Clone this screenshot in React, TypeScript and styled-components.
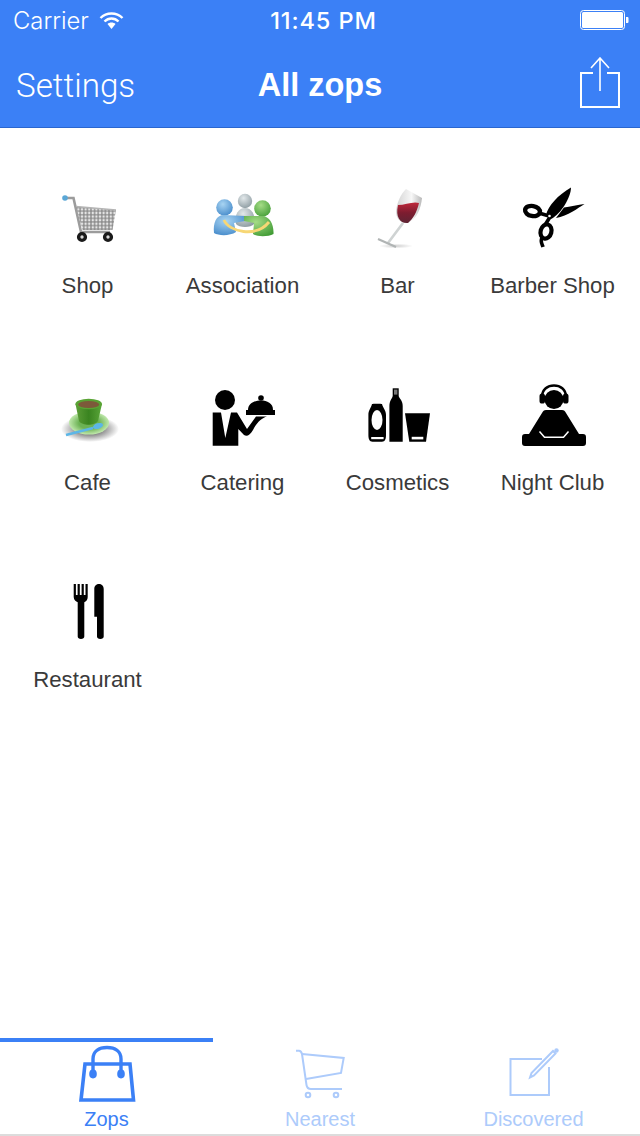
import React from 'react';
import styled, { createGlobalStyle } from 'styled-components';

const BLUE = '#3b80f6';

const GlobalStyles = createGlobalStyle`
  html, body {
    margin: 0;
    padding: 0;
    background: #fff;
    font-family: "Liberation Sans", Arial, sans-serif;
  }
`;

const Page = styled.div`
  width: 640px;
  height: 1136px;
  display: flex;
  flex-direction: column;
  background: #fff;
  overflow: hidden;
`;

const Header = styled.header`
  height: 127px;
  flex: none;
  background: ${BLUE};
  border-bottom: 1px solid #2a66cf;
  color: #fff;
  display: flex;
  flex-direction: column;
`;

const StatusBar = styled.div`
  height: 40px;
  padding: 0 11px 0 13px;
  display: grid;
  grid-template-columns: 1fr auto 1fr;
  align-items: center;
`;

const StatusLeft = styled.div`
  display: flex;
  align-items: center;
  gap: 10px;
  font-size: 23.8px;
  font-family: Inter, sans-serif;
  font-weight: 300;
`;

const Clock = styled.div`
  font-size: 23.5px;
  font-weight: 500;
  font-family: Inter, sans-serif;
  letter-spacing: 0.9px;
  margin-left: 5px;
`;

const StatusRight = styled.div`
  display: flex;
  justify-content: flex-end;
`;

const NavBar = styled.div`
  flex: 1;
  display: grid;
  grid-template-columns: 1fr auto 1fr;
  align-items: center;
  padding: 3px 16px 0;
`;

const NavLink = styled.div`
  font-family: Roboto, sans-serif;
  font-size: 33.2px;
  font-weight: 300;
`;

const NavTitle = styled.h1`
  margin: 0;
  font-size: 32.5px;
  font-weight: 700;
  font-family: "Liberation Sans", sans-serif;
`;

const NavAction = styled.div`
  display: flex;
  justify-content: flex-end;
  padding-right: 4px;
  margin-bottom: 6px;
`;

const Grid = styled.main`
  flex: 1;
  display: grid;
  grid-template-columns: repeat(4, 155px);
  grid-auto-rows: 197px;
  padding: 58px 10px 0;
`;

const Tile = styled.div`
  display: flex;
  flex-direction: column;
  align-items: center;
`;

const IconBox = styled.svg`
  width: 66px;
  height: 66px;
  display: block;
`;

const Label = styled.span`
  margin-top: 21px;
  font-size: 22.2px;
  line-height: 26px;
  color: #3a3a3a;
`;

const TabBar = styled.nav`
  height: 96px;
  flex: none;
  display: grid;
  grid-template-columns: 213px 214px 213px;
  border-bottom: 2px solid #dcdcdc;
`;

const Tab = styled.div<{ $active?: boolean }>`
  display: flex;
  flex-direction: column;
  align-items: center;
  border-top: 4px solid ${(p) => (p.$active ? BLUE : 'transparent')};
  color: ${(p) => (p.$active ? BLUE : '#adcbfb')};
`;

const TabIcon = styled.svg`
  width: 64px;
  height: 60px;
  display: block;
  margin-top: 2px;
`;

const TabLabel = styled.span`
  font-size: 20px;
  line-height: 24px;
  margin-top: 3px;
`;

const CartIcon = () => (
  <IconBox viewBox="0 0 66 66">
    <defs>
      <pattern id="mesh" width="3.6" height="3.6" patternUnits="userSpaceOnUse">
        <rect width="3.6" height="3.6" fill="#8e8e8e" />
        <circle cx="1.8" cy="1.8" r="1.25" fill="#e6e6e6" />
      </pattern>
    </defs>
    <path d="M10 12H18.5L26 46H55" fill="none" stroke="#9c9c9c" strokeWidth="2.6" />
    <circle cx="10" cy="12" r="2.8" fill="#5aa7d6" />
    <path d="M21 20.5L61 24L57.5 44L27.5 44Z" fill="url(#mesh)" />
    <path d="M21 20.5L61 24" stroke="#b5b5b5" strokeWidth="1.4" />
    <circle cx="27" cy="51" r="3.4" fill="#d8d8d8" stroke="#1a1a1a" strokeWidth="3.4" />
    <circle cx="53" cy="51" r="3.4" fill="#d8d8d8" stroke="#1a1a1a" strokeWidth="3.4" />
  </IconBox>
);

const PeopleIcon = () => (
  <IconBox viewBox="0 0 66 66">
    <defs>
      <radialGradient id="pBlue" cx="0.4" cy="0.3" r="0.8">
        <stop offset="0" stopColor="#a8d4f2" />
        <stop offset="1" stopColor="#3f86c8" />
      </radialGradient>
      <radialGradient id="pGreen" cx="0.4" cy="0.3" r="0.8">
        <stop offset="0" stopColor="#a5dc86" />
        <stop offset="1" stopColor="#3f9a33" />
      </radialGradient>
      <radialGradient id="pGrey" cx="0.4" cy="0.3" r="0.8">
        <stop offset="0" stopColor="#e2e8ea" />
        <stop offset="1" stopColor="#87969c" />
      </radialGradient>
    </defs>
    <circle cx="35" cy="15" r="7.2" fill="url(#pGrey)" />
    <path d="M26 38C24 28 29 22 35 22C41 22 46 28 44 38C41 42 29 42 26 38Z" fill="url(#pGrey)" />
    <circle cx="14.5" cy="21.5" r="8.3" fill="url(#pBlue)" />
    <path d="M4 47C3 37 6 29 14 29C20 29 28 30 35 30V35L24 37L26 46C20 50 9 50 4 47Z" fill="url(#pBlue)" />
    <circle cx="52.5" cy="22.5" r="8.3" fill="url(#pGreen)" />
    <path d="M34 30L52 30C60 30 64 39 63.5 48C58 51 47 51 43 48L44 37L34 35Z" fill="url(#pGreen)" />
    <path d="M14 34C19 46 46 52 59 36" fill="none" stroke="#f7d775" strokeWidth="2.8" />
  </IconBox>
);

const WineIcon = () => (
  <IconBox viewBox="0 0 66 66">
    <defs>
      <linearGradient id="wine" x1="0" y1="0" x2="0" y2="1">
        <stop offset="0" stopColor="#c0283a" />
        <stop offset="0.5" stopColor="#7d1c30" />
        <stop offset="1" stopColor="#5e2434" />
      </linearGradient>
      <linearGradient id="glass" x1="0" y1="0" x2="1" y2="0">
        <stop offset="0" stopColor="#d4d4d4" />
        <stop offset="0.6" stopColor="#f7f7f7" />
        <stop offset="1" stopColor="#b8b8b8" />
      </linearGradient>
      <radialGradient id="floor">
        <stop offset="0" stopColor="#cfcfcf" />
        <stop offset="1" stopColor="#fff" />
      </radialGradient>
    </defs>
    <ellipse cx="31" cy="60" rx="17" ry="2.4" fill="url(#floor)" />
    <path d="M41 3L57 12C56 22 52 33 43 37C36 38 31 33 31 25C32 16 36 8 41 3Z" fill="url(#glass)" />
    <path d="M33 19C40 19 48 15 54 17C52 26 48 33 43 37C36 38 30 32 33 19Z" fill="url(#wine)" />
    <path d="M38 37L23 57" stroke="#cfd3d3" strokeWidth="2.6" />
    <path d="M13 53L31 61" stroke="#b0b4b4" strokeWidth="2.2" />
  </IconBox>
);

const ScissorsIcon = () => (
  <IconBox viewBox="0 0 66 66">
    <path d="M51 1.5C51 11 41 28 31 33L26 29C28 20 38 9 51 1.5Z" fill="#000" />
    <path d="M64.5 18C58 22 48 30 36 32L44 21.5C50 20.5 58 19 64.5 18Z" fill="#000" />
    <ellipse cx="12.5" cy="25" rx="7.5" ry="5" fill="none" stroke="#000" strokeWidth="4.4" transform="rotate(10 12.5 25)" />
    <path d="M19 27L29 30" stroke="#000" strokeWidth="3.6" />
    <ellipse cx="26" cy="45.5" rx="5.4" ry="7.2" fill="none" stroke="#000" strokeWidth="4.2" transform="rotate(15 26 45.5)" />
    <path d="M30 31L25 39M22 52C20 55 22 58 23 61" fill="none" stroke="#000" strokeWidth="3.6" />
    <circle cx="29.5" cy="30" r="1.3" fill="#fff" />
  </IconBox>
);

const CupIcon = () => (
  <IconBox viewBox="0 0 66 66">
    <defs>
      <radialGradient id="cupShadow">
        <stop offset="0.35" stopColor="#777" />
        <stop offset="1" stopColor="#fff" />
      </radialGradient>
      <linearGradient id="cupBody" x1="0" y1="0" x2="1" y2="0">
        <stop offset="0" stopColor="#5d9e38" />
        <stop offset="0.5" stopColor="#3a8420" />
        <stop offset="1" stopColor="#5aa63a" />
      </linearGradient>
      <radialGradient id="saucer">
        <stop offset="0.5" stopColor="#6cb254" />
        <stop offset="1" stopColor="#c0e8ac" />
      </radialGradient>
    </defs>
    <ellipse cx="35" cy="46" rx="29" ry="13" fill="url(#cupShadow)" />
    <ellipse cx="34" cy="40" rx="20" ry="11.5" fill="url(#saucer)" />
    <path d="M20.5 21H47L43 38C40 43 27 43 24 38Z" fill="url(#cupBody)" />
    <ellipse cx="33.7" cy="21" rx="13.3" ry="5.2" fill="#59a334" />
    <ellipse cx="33.7" cy="21.5" rx="10.5" ry="3.6" fill="#7c5a3a" />
    <path d="M11 52L38 45" stroke="#5cb6e6" strokeWidth="2.4" />
    <ellipse cx="43" cy="43" rx="5.2" ry="2.8" fill="#5cb6e6" transform="rotate(-18 43 43)" />
  </IconBox>
);

const WaiterIcon = () => (
  <IconBox viewBox="0 0 66 66">
    <circle cx="15" cy="17" r="10" fill="#000" />
    <path d="M2.7 29.5H11L15.3 55L21 29.5H27L37 46L46 33.5H57C52 35 47 39 43 47C40 52 37 54 34 52L28.3 46V62.7H2.7Z" fill="#000" />
    <path d="M38 27C38 20 45 17.5 51 17.5C57 17.5 63 20 63 27Z" fill="#000" />
    <circle cx="51" cy="15" r="2.8" fill="#000" />
    <rect x="36" y="27" width="29" height="5" fill="#000" />
  </IconBox>
);

const CosmeticsIcon = () => (
  <IconBox viewBox="0 0 66 66">
    <path d="M3.4 32C3.4 27 6 25 7 21C7.5 20.5 16.5 20.5 17 21C18 25 21 27 21 32V52C21 56 20 58.7 17 58.7H7.5C4.5 58.7 3.4 56 3.4 52Z" fill="#000" />
    <ellipse cx="12" cy="37" rx="5.5" ry="10" fill="#fff" />
    <rect x="6.2" y="54" width="12.4" height="2.2" fill="#fff" />
    <rect x="27.7" y="5.3" width="6" height="8" fill="#000" />
    <rect x="29" y="6.6" width="3.4" height="5" fill="#777" />
    <path d="M24.4 23C24.4 17 27.7 15 27.7 13H33.7C33.7 15 37.7 17 37.7 23V58.7H24.4Z" fill="#000" />
    <path d="M40 30.3H65L61 58.7H44.3Z" fill="#000" />
    <rect x="46.7" y="53.8" width="11.6" height="2.6" fill="#fff" />
  </IconBox>
);

const DjIcon = () => (
  <IconBox viewBox="0 0 66 66">
    <path d="M22 14C22 6 28 2.5 34 2.5C40 2.5 46 6 46 14" fill="none" stroke="#000" strokeWidth="2.6" />
    <circle cx="34" cy="16.5" r="9.5" fill="#000" />
    <rect x="19.5" y="10.5" width="5.5" height="10" rx="2.6" fill="#000" />
    <rect x="43" y="10.5" width="5.5" height="10" rx="2.6" fill="#000" />
    <path d="M26 27H42C44 27 45 28 46 30L59 51H63C65 51 66 52 66 54V60C66 62 65 63 63 63H5C3 63 2 62 2 60V54C2 52 3 51 5 51H9L22 30C23 28 24 27 26 27Z" fill="#000" />
    <path d="M19.5 48.5L24.5 54.3H43.5L48.5 48.5" fill="none" stroke="#fff" strokeWidth="1.5" />
  </IconBox>
);

const CutleryIcon = () => (
  <IconBox viewBox="0 0 66 66">
    <path d="M18.7 4H20.9V15H22.6V4H24.8V15H26.6V4H28.8V15H30.5V4H32.7V17C32.7 20 31 21.5 29.3 22.2V56.5C29.3 58 28 59 26 59C24 59 22.7 58 22.7 56.5V22.2C21 21.5 18.7 20 18.7 17Z" fill="#000" />
    <path d="M39.3 9C39.3 5.5 41.5 4 44 4C46.5 4 48.7 5.5 48.7 9V56.5C48.7 58 47.5 59 45.3 59C43.2 59 42 58 42 56.5V36.7H39.3Z" fill="#000" />
  </IconBox>
);

const BagIcon = () => (
  <TabIcon viewBox="0 0 64 60">
    <path d="M10 20H55L58.5 56H6Z" fill="none" stroke="currentColor" strokeWidth="3.6" />
    <path d="M18 30V15C18 7 24 3.5 32 3.5C40 3.5 46 7 46 15V30" fill="none" stroke="currentColor" strokeWidth="3.4" />
    <ellipse cx="18" cy="30" rx="3.8" ry="4.4" fill="currentColor" />
    <ellipse cx="46" cy="30" rx="3.8" ry="4.4" fill="currentColor" />
  </TabIcon>
);

const TrolleyIcon = () => (
  <TabIcon viewBox="0 0 64 60">
    <path d="M8 6.7H11C13 6.7 13.5 8 14 10L18.5 41C19 44 21 45 23 45H54" fill="none" stroke="currentColor" strokeWidth="2" />
    <path d="M14 10L55.7 14L53 29L18 35" fill="none" stroke="currentColor" strokeWidth="2" />
    <circle cx="20" cy="51" r="2.3" fill="none" stroke="currentColor" strokeWidth="2" />
    <circle cx="48" cy="51" r="2.3" fill="none" stroke="currentColor" strokeWidth="2" />
  </TabIcon>
);

const NoteIcon = () => (
  <TabIcon viewBox="0 0 64 60">
    <path d="M40 15H8.5V51H47V23" fill="none" stroke="currentColor" strokeWidth="2" />
    <path d="M28 33.5L29.5 29L51 7L53.5 9.5L32 31.5Z" fill="none" stroke="currentColor" strokeWidth="2" />
    <circle cx="54.5" cy="6.5" r="2.2" fill="currentColor" />
  </TabIcon>
);

const Wifi = () => (
  <svg width="25" height="19" viewBox="0 0 25 19">
    <path d="M1.5 7C7.5 1 17.5 1 23.5 7" fill="none" stroke="#fff" strokeWidth="2.4" />
    <path d="M5.5 10.5C9.5 6.5 15.5 6.5 19.5 10.5" fill="none" stroke="#fff" strokeWidth="2.4" />
    <path d="M8.5 13C10.5 11 14.5 11 16.5 13L12.5 18Z" fill="#fff" />
  </svg>
);

const Battery = () => (
  <svg width="49" height="20" viewBox="0 0 49 20">
    <rect x="0.5" y="0.5" width="44" height="19" rx="3" fill="none" stroke="#fff" />
    <rect x="2" y="2" width="41" height="16" rx="1.5" fill="#fff" />
    <path d="M46 7H47C48 7 48.5 7.5 48.5 8V12C48.5 12.5 48 13 47 13H46Z" fill="#fff" />
  </svg>
);

const ShareIcon = () => (
  <svg width="40" height="51" viewBox="0 0 40 51">
    <path d="M13 16H1V50H39V16H27" fill="none" stroke="#fff" strokeWidth="2" />
    <path d="M20 1V34M11 11L20 1L29 11" fill="none" stroke="#fff" strokeWidth="1.6" />
  </svg>
);

const zops = [
  { name: 'Shop', Icon: CartIcon },
  { name: 'Association', Icon: PeopleIcon },
  { name: 'Bar', Icon: WineIcon },
  { name: 'Barber Shop', Icon: ScissorsIcon },
  { name: 'Cafe', Icon: CupIcon },
  { name: 'Catering', Icon: WaiterIcon },
  { name: 'Cosmetics', Icon: CosmeticsIcon },
  { name: 'Night Club', Icon: DjIcon },
  { name: 'Restaurant', Icon: CutleryIcon },
];

export default function App() {
  return (
    <Page>
      <GlobalStyles />
      <Header>
        <StatusBar>
          <StatusLeft>
            Carrier <Wifi />
          </StatusLeft>
          <Clock>11:45 PM</Clock>
          <StatusRight>
            <Battery />
          </StatusRight>
        </StatusBar>
        <NavBar>
          <NavLink>Settings</NavLink>
          <NavTitle>All zops</NavTitle>
          <NavAction>
            <ShareIcon />
          </NavAction>
        </NavBar>
      </Header>
      <Grid>
        {zops.map(({ name, Icon }) => (
          <Tile key={name}>
            <Icon />
            <Label>{name}</Label>
          </Tile>
        ))}
      </Grid>
      <TabBar>
        <Tab $active>
          <BagIcon />
          <TabLabel>Zops</TabLabel>
        </Tab>
        <Tab>
          <TrolleyIcon />
          <TabLabel>Nearest</TabLabel>
        </Tab>
        <Tab>
          <NoteIcon />
          <TabLabel>Discovered</TabLabel>
        </Tab>
      </TabBar>
    </Page>
  );
}
